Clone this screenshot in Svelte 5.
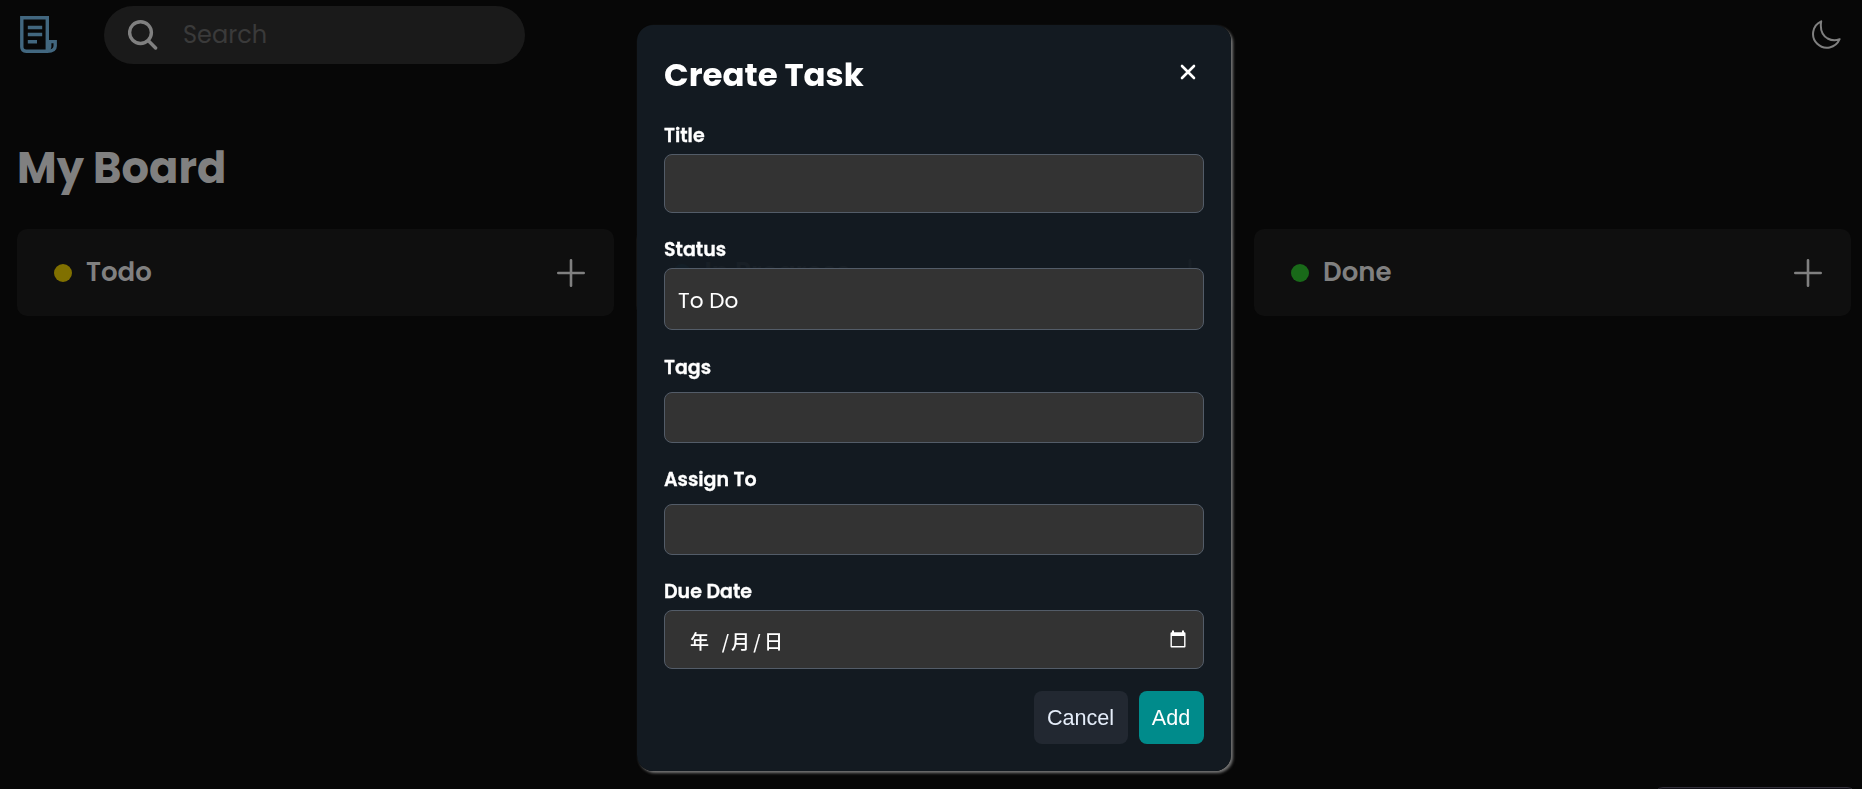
<script>
  const columns = [
    { name: 'Todo', color: '#807000' },
    { name: 'In Progress', color: '#00709a' },
    { name: 'Done', color: '#196a19' }
  ];
  let status = $state('To Do');
</script>

<div class="app">
  <header>
    <svg class="logo" viewBox="0 0 37 37" fill="none" stroke="#42677f" stroke-width="3.4">
      <path d="M27.3 35.2H6.2Q1.8 35.2 1.8 30.8V1.8H27.3V35.2Q35.2 35.2 35.2 30V25.6H29" />
      <path d="M30.2 25.6V30.6Q30.2 33 27.6 34" stroke-width="2.4" />
      <path d="M7.8 11.5H22.2M7.8 18.5H22.2M7.8 25.8H17" />
    </svg>
    <div class="search">
      <svg viewBox="0 0 30 30" fill="none" stroke="#808080" stroke-width="3.4" stroke-linecap="round">
        <circle cx="12.5" cy="12.6" r="10.9" /><path d="M20.4 20.8 27.6 28" />
      </svg>
      <span>Search</span>
    </div>
    <svg class="moon" viewBox="0 0 30 30" fill="none" stroke="#808080" stroke-width="2" stroke-linejoin="round">
      <path d="M10.2 1.3A13.8 13.8 0 1 0 28.6 19.2Q22.6 21.6 16.6 18.5Q8.2 13.3 10.2 1.3Z" />
    </svg>
  </header>

  <h1>My Board</h1>

  <main>
    {#each columns as c}
      <section>
        <i style="background:{c.color}"></i>
        <h2>{c.name}</h2>
        <svg viewBox="0 0 28 28" stroke="#808080" stroke-width="2.6" stroke-linecap="round">
          <path d="M14 1.3V26.7M1.3 14H26.7" />
        </svg>
      </section>
    {/each}
  </main>
  <div class="peek"></div>
</div>

<div class="overlay">
  <div class="modal">
    <div class="head">
      <h3>Create Task</h3>
      <svg viewBox="0 0 16 16" stroke="#fff" stroke-width="2.6" stroke-linecap="round">
        <path d="M2 2 14 14M14 2 2 14" />
      </svg>
    </div>
    <div class="label title">Title</div>
    <div class="field tall"></div>
    <div class="label status">Status</div>
    <div class="field select">{status}</div>
    <div class="label tags">Tags</div>
    <div class="field short"></div>
    <div class="label assign">Assign To</div>
    <div class="field short"></div>
    <div class="label due">Due Date</div>
    <div class="field tall date">
      <span class="y">年</span><span class="s1">/</span><span>月</span><span class="s2">/</span><span>日</span>
      <svg viewBox="0 0 16 18">
        <path fill="#fff" fill-rule="evenodd" d="M2 .5H4V2.3H12V.5H14V2.3H14.5Q15.5 2.3 15.5 3.4V16.4Q15.5 17.5 14.5 17.5H1.5Q.5 17.5 .5 16.4V3.4Q.5 2.3 1.5 2.3H2ZM1.9 6V16H14.1V6Z" />
      </svg>
    </div>
    <div class="actions">
      <button class="cancel">Cancel</button>
      <button class="add">Add</button>
    </div>
  </div>
</div>

<style>
  :global(body) { background: #070707; overflow: hidden; }
  * { box-sizing: border-box; }
  .app, .modal { font-family: Poppins, Inter, "Noto Sans CJK SC", sans-serif; }
  .app { height: 789px; display: flex; flex-direction: column; overflow: hidden; color: #808080; }
  header { height: 64px; padding: 6px 21px 0 20px; display: flex; align-items: flex-start; }
  .logo { width: 37px; height: 37px; margin-top: 10px; }
  .search { width: 421px; height: 58px; margin-left: 47px; border-radius: 29px; background: #1a1a1a; display: flex; align-items: center; padding: 0 0 1px 24px; color: #3a3a3a; font-size: 24px; }
  .search svg { width: 30px; height: 30px; margin-right: 27px; }
  .search span { margin-left: -2px; line-height: 30px; }
  .moon { width: 30px; height: 30px; margin: 14px 0 0 auto; }
  h1, h2, h3 { margin: 0; }
  h1 { margin: 76px 0 0 17px; height: 60px; line-height: 56px; font-size: 43.2px; font-weight: 700; }
  main { margin-top: 29px; padding: 0 11px 0 17px; display: grid; grid-template-columns: repeat(3, 597px); justify-content: space-between; }
  section { height: 87px; border-radius: 10px; background: #0f0f0f; display: flex; align-items: center; padding: 0 29px 0 37px; }
  section i { width: 18px; height: 18px; border-radius: 50%; margin-right: 14px; }
  section h2 { font-size: 26px; font-weight: 600; line-height: 30px; margin-top: -1px; }
  section svg { width: 28px; height: 28px; margin-left: auto; }
  .peek { width: 204px; height: 22px; margin: auto 5px -20px auto; flex: none; border: 1px solid #32303a; border-radius: 10px; background: #111016; }
  .overlay { position: fixed; inset: 0; padding: 24.5px 0 0 637px; }
  .modal { width: 594px; height: 746px; padding: 32px 27px 0; border-radius: 16px; background: rgba(20, 27, 34, .96); box-shadow: 2px 2px 3px #777; display: flex; flex-direction: column; color: #fff; }
  .head { display: flex; height: 61px; justify-content: space-between; }
  h3 { font-size: 32.4px; font-weight: 700; line-height: 36px; }
  .head svg { width: 16px; height: 16px; margin: 7.5px 8.5px 0 0; }
  .label { height: 24px; line-height: 24px; font-size: 19px; font-weight: 600; flex: none; -webkit-text-stroke: .3px #fff; }
  .title { margin: 6.5px 0 6px; }
  .status { margin: 25px 0 6px; }
  .tags { margin: 25.5px 0 12.5px; }
  .assign { margin: 24.5px 0 12.5px; }
  .due { margin: 24.5px 0 6.5px; }
  .field { flex: none; border: 1px solid #535c68; border-radius: 8px; background: #333; display: flex; align-items: center; }
  .tall { height: 59px; }
  .select { height: 62px; padding: 2px 13px 0; font-size: 21.6px; }
  .short { height: 50px; height: 51px; }
  .date { padding: 2px 17px 0 25px; font-family: "Noto Sans CJK SC", sans-serif; font-size: 19px; font-weight: 500; }
  .date .y { margin-right: 11px; }
  .date .s1, .date .s2 { width: 11px; text-align: center; }
  .date .s2 { margin: 0 1.5px; }
  .date svg { width: 16px; height: 18px; margin: -3px 0 0 auto; }
  .actions { display: flex; justify-content: flex-end; gap: 11px; margin-top: 22px; }
  button { height: 53px; border: 0; border-radius: 8px; padding: 0 1px 0 0; font: 21.6px "Liberation Sans", Arial, sans-serif; color: #fff; }
  .cancel { width: 94px; background: #222831; color: #e5edf9; }
  .add { width: 65px; background: #008b8b; }
</style>
